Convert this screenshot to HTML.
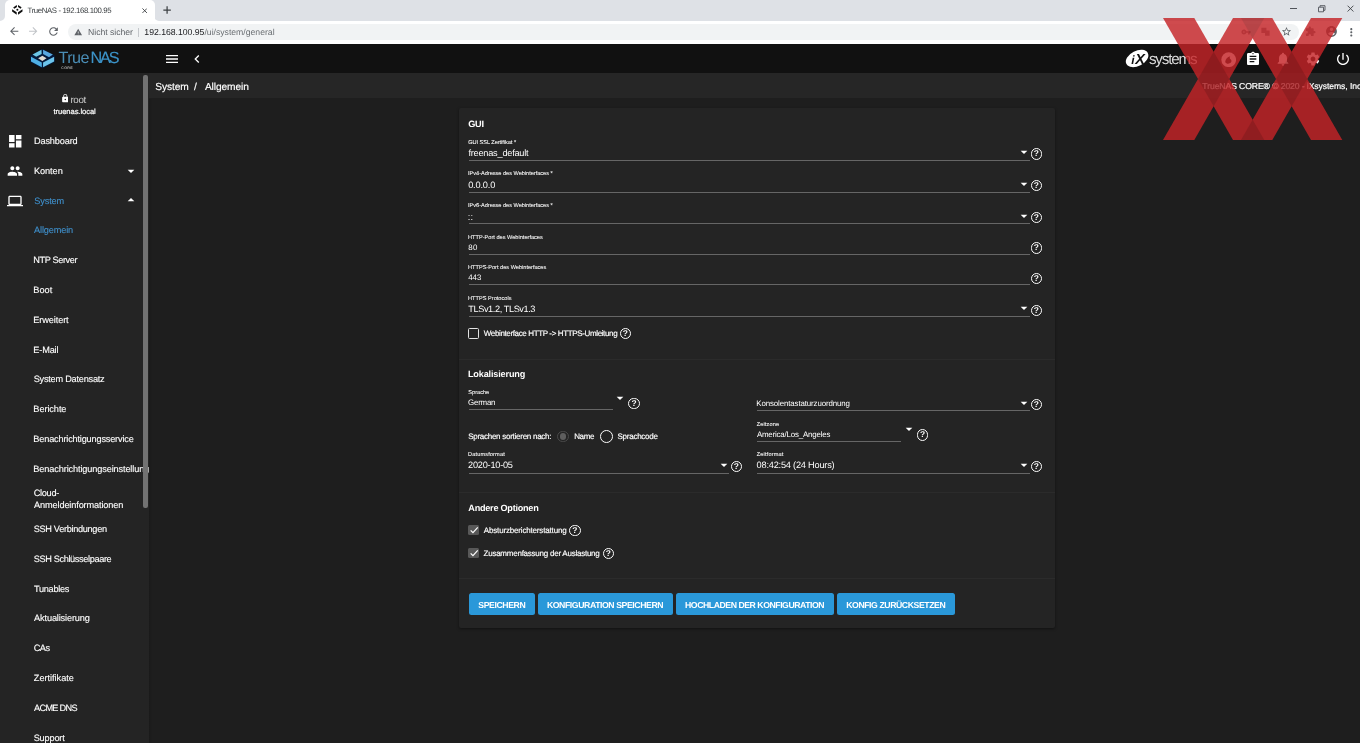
<!DOCTYPE html>
<html lang="de">
<head>
<meta charset="utf-8">
<title>TrueNAS - 192.168.100.95</title>
<style>
*{box-sizing:border-box;margin:0;padding:0}
html,body{width:1360px;height:743px;overflow:hidden;background:#1e1e1e}
body{font-family:"Liberation Sans",sans-serif;color:#fff;position:relative;text-rendering:geometricPrecision}
#root{position:absolute;left:0;top:0;width:1360px;height:743px;overflow:hidden;will-change:transform}
.a{position:absolute;white-space:nowrap;line-height:1}
.b{position:absolute}
svg{position:absolute;display:block}
#tabbar{left:0;top:0;width:1360px;height:21px;background:#dee1e6}
#tab{left:4.500px;top:0;width:150px;height:21px;background:#fff;border-radius:5px 5px 0 0}
#toolbar{left:0;top:20.500px;width:1360px;height:23.500px;background:#fff}
#omni{left:68px;top:23.500px;width:1231px;height:16.500px;border-radius:8.250px;background:#f1f3f4}
#topbar{left:0;top:44px;width:1360px;height:28.700px;background:#111}
#crumb{left:148px;top:72.700px;width:1212px;height:25.800px;background:#262626}
#side{left:0;top:72.700px;width:149px;height:671px;background:#242424}
#sb{left:143.200px;top:75px;width:4.500px;height:433.300px;background:#727272;border-radius:2px}
#card{left:459px;top:108px;width:596px;height:519.500px;background:#242424;border-radius:2px;box-shadow:0 1px 3px rgba(0,0,0,.45)}
.ul{position:absolute;height:1.200px;background:#666}
.hr{position:absolute;left:459px;width:596px;height:1px;background:#2b2b2b}
.help{position:absolute;width:11.400px;height:11.400px;border:1.450px solid #fff;border-radius:50%;color:#fff;font-size:8.400px;font-weight:bold;text-align:center;line-height:9.300px}
.btn{position:absolute;top:593.200px;height:22.300px;background:#2a98d9;border-radius:2.500px}
.cb{position:absolute;border-radius:1.500px}
</style>
</head>
<body>
<div id="root">
<div class="b" id="tabbar"></div><div class="b" id="tab"></div><div class="b" id="toolbar"></div><div class="b" id="omni"></div>
<svg style="left:0;top:16px" width="5" height="5" viewBox="0 0 5 5"><path fill="#fff" d="M5 0v5H0A5 5 0 0 0 5 0z"/></svg>
<svg style="left:154px;top:16px" width="5" height="5" viewBox="0 0 5 5"><path fill="#fff" d="M0 0v5h5A5 5 0 0 1 0 0z"/></svg>
<svg style="left:11px;top:4px" width="13" height="12" viewBox="11 4 13 12"><path fill="#111" d="M16.700 5.100 13.200 7.400 14.300 8.800 17 7.100zM18 5.100 21.600 7.300 20.600 8.800 18 7.100zM12.100 9.300 16.700 12.300V14.700L12.100 11.500zM22.500 9.300 18 12.300V14.700L22.500 11.500z"/><circle cx="17.350" cy="9.800" r="1" fill="#111"/></svg>
<div class="a" id="t0" style="left:27.59px;top:7px;font-size:7.8px;color:#3c4043;letter-spacing:-0.388px;">TrueNAS - 192.168.100.95</div>
<svg style="left:141.500px;top:7.600px" width="5.400" height="5.400" viewBox="0 0 24 24"><path fill="none" stroke="#3c4043" stroke-width="4" d="M2 2l20 20M22 2 2 22"/></svg>
<svg style="left:163.200px;top:6px" width="8.200" height="8.200" viewBox="0 0 24 24"><path fill="none" stroke="#3c4043" stroke-width="3.600" d="M12 1v22M1 12h22"/></svg>
<svg style="left:7.5px;top:25.4px" width="12.4" height="12.4" viewBox="0 0 24 24"><path fill="#5f6368" d="M20 11H7.830l5.590-5.590L12 4l-8 8 8 8 1.410-1.410L7.830 13H20v-2z"/></svg>
<svg style="left:27.1px;top:25.4px" width="12.4" height="12.4" viewBox="0 0 24 24"><path fill="#c1c4c8" d="M12 4l-1.410 1.410L16.170 11H4v2h12.170l-5.580 5.590L12 20l8-8z"/></svg>
<svg style="left:47px;top:25px" width="13" height="13" viewBox="0 0 24 24"><path fill="#5f6368" d="M17.650 6.350C16.200 4.900 14.210 4 12 4c-4.420 0-7.990 3.580-7.990 8s3.570 8 7.990 8c3.730 0 6.840-2.550 7.730-6h-2.080c-.82 2.330-3.040 4-5.650 4-3.310 0-6-2.690-6-6s2.690-6 6-6c1.660 0 3.140.69 4.220 1.780L13 11h7V4l-2.350 2.350z"/></svg>
<svg style="left:74.3px;top:27.7px" width="8.4" height="8.4" viewBox="0 0 24 24"><path fill="#5f6368" d="M1 21h22L12 2 1 21zm12-3h-2v-2h2v2zm0-4h-2v-4h2v4z"/></svg>
<div class="a" id="t1" style="left:88.05px;top:28px;font-size:8.7px;color:#5f6368;letter-spacing:-0.044px;">Nicht sicher</div>
<div class="b" style="left:138px;top:27.800px;width:1px;height:9px;background:#c4c7cb"></div>
<div class="a" id="t2" style="left:144.35px;top:28px;font-size:8.7px;color:#202124;letter-spacing:-0.022px;">192.168.100.95<span style="color:#6b6f73">/ui/system/general</span></div>
<div class="b" style="left:1290.200px;top:7.900px;width:7.200px;height:1px;background:#50545a"></div>
<svg style="left:1317px;top:4px" width="10" height="9" viewBox="1317 4 10 9"><path fill="none" stroke="#50545a" stroke-width=".9" d="M1318.500 7.200h5v4.600h-5zM1320 7.200V5.700h5v4.600h-1.500"/></svg>
<svg style="left:1346px;top:4px" width="9" height="9" viewBox="1346 4 9 9"><path fill="none" stroke="#3c4043" stroke-width=".9" d="M1347.600 5.700l5.800 5.800M1353.400 5.700l-5.800 5.800"/></svg>
<svg style="left:1241px;top:26.5px" width="10" height="10" viewBox="0 0 24 24"><path fill="#7a7f85" d="M12.650 10C11.830 7.670 9.610 6 7 6c-3.310 0-6 2.690-6 6s2.690 6 6 6c2.610 0 4.830-1.670 5.650-4H17v4h4v-4h2v-4H12.650zM7 14c-1.100 0-2-.9-2-2s.9-2 2-2 2 .9 2 2-.9 2-2 2z"/></svg>
<svg style="left:1260px;top:26px" width="11" height="11" viewBox="0 0 24 24"><path fill="#7a7f85" d="M3 4h11v11H3zM11 10h10v11H11z"/></svg>
<svg style="left:1280.5px;top:26px" width="11" height="11" viewBox="0 0 24 24"><path fill="#5f6368" d="M22 9.240l-7.190-.62L12 2 9.190 8.630 2 9.240l5.460 4.730L5.820 21 12 17.270 18.180 21l-1.630-7.030L22 9.240zM12 15.400l-3.760 2.270 1-4.280-3.320-2.880 4.380-.38L12 6.100l1.710 4.040 4.380.38-3.320 2.880 1 4.280L12 15.400z"/></svg>
<svg style="left:1304.5px;top:26px" width="11" height="11" viewBox="0 0 24 24"><path fill="#7a7f85" d="M20.500 11H19V7c0-1.100-.9-2-2-2h-4V3.500C13 2.120 11.880 1 10.500 1S8 2.120 8 3.500V5H4c-1.100 0-1.990.9-1.990 2v3.800H3.500c1.490 0 2.700 1.210 2.700 2.700s-1.210 2.700-2.700 2.700H2V20c0 1.100.9 2 2 2h3.800v-1.500c0-1.490 1.210-2.700 2.700-2.700 1.490 0 2.700 1.210 2.700 2.700V22H17c1.100 0 2-.9 2-2v-4h1.500c1.380 0 2.500-1.120 2.500-2.500S21.880 11 20.500 11z"/></svg>
<svg style="left:1324.5px;top:25px" width="13" height="13" viewBox="0 0 24 24"><path fill="#5f6368" d="M12 2C6.480 2 2 6.480 2 12s4.480 10 10 10 10-4.480 10-10S17.520 2 12 2zm0 3c1.660 0 3 1.340 3 3s-1.340 3-3 3-3-1.340-3-3 1.340-3 3-3zm0 14.200c-2.500 0-4.710-1.280-6-3.220.03-1.990 4-3.080 6-3.080 1.990 0 5.970 1.090 6 3.080-1.290 1.940-3.500 3.220-6 3.220z"/></svg>
<svg style="left:1344.9px;top:25.6px" width="12.6" height="12.6" viewBox="0 0 24 24"><path fill="#5f6368" d="M12 8c1.100 0 2-.9 2-2s-.9-2-2-2-2 .9-2 2 .9 2 2 2zm0 2c-1.100 0-2 .9-2 2s.9 2 2 2 2-.9 2-2-.9-2-2-2zm0 6c-1.100 0-2 .9-2 2s.9 2 2 2 2-.9 2-2-.9-2-2-2z"/></svg>
<div class="b" id="topbar"></div><div class="b" id="crumb"></div><div class="b" id="side"></div><div class="b" id="card"></div>
<svg style="left:28px;top:46px" width="30" height="26" viewBox="28 46 30 26">
<path fill="#04193a" d="M42.350 48.900 54.800 55.600V62L42.350 68.400 30.300 62V55.600z"/>
<path fill="#6cc6e6" d="M41.500 49.700 32.550 54.600 36.200 56.850 41.650 53.900z"/>
<path fill="#5aa8e0" d="M43.050 49.700 52.850 54.600 49 57.200 43.050 54.050z"/>
<path fill="#4fb0e6" d="M31 56.850 41.800 62.450V67.350L31 61.400z"/>
<path fill="#6cc4ec" d="M54.100 56.850 43.050 62.450V67.350L54.100 61.400z"/>
<path fill="#e2dcd2" d="M42.350 55.800 46.550 58.250 42.350 61.050 38.150 58.250z"/>
</svg>
<div class="a" id="t3" style="left:58.48px;top:50px;font-size:16.2px;color:#4a8db5;letter-spacing:-.55px;">True<span style="color:#3c93c8;-webkit-text-stroke:.12px #3c93c8;letter-spacing:-2.2px;margin-left:1.6px">NAS</span></div>
<div class="a" id="t4" style="left:61.36px;top:67px;font-size:3.6px;color:#b0b0b0;font-weight:bold;letter-spacing:0.296px;">CORE</div>
<svg style="left:163.6px;top:50.8px" width="16" height="16" viewBox="0 0 24 24"><path fill="#fff" d="M3 18h18v-2H3v2zm0-5h18v-2H3v2zm0-7v2h18V6H3z"/></svg>
<svg style="left:188.6px;top:51.2px" width="16" height="16" viewBox="0 0 24 24"><path fill="#fff" d="M15.41 7.41L14 6l-6 6 6 6 1.41-1.41L10.83 12z"/></svg>
<div class="b" style="left:1125.400px;top:51.100px;width:24px;height:14.600px;background:#fff;border-radius:50%;transform:rotate(-27deg)"></div>
<div class="a" id="t5" style="left:1131.18px;top:53px;font-size:14.5px;color:#111;font-weight:bold;font-style:italic;"><span style="font-size:12px;margin-right:.85px">i</span>X</div>
<div class="a" id="t6" style="left:1148.92px;top:52px;font-size:15.2px;color:#dcdcdc;letter-spacing:-1.182px;">systems</div>
<svg style="left:1220.500px;top:52px" width="15.400" height="15.400" viewBox="0 0 24 24"><circle cx="12" cy="12" r="11.500" fill="#fff"/><path fill="#111" d="M6.500 15.500c.5-4.500 3.500-8 8-9-1.500 2-1 3.500.5 5 1.500 1.500 2 3 .5 5-2.500 2.500-7.500 2.500-9-1z"/></svg>
<svg style="left:1245px;top:51.3px" width="16" height="16" viewBox="0 0 24 24"><path fill="#fff" d="M19 3h-4.180C14.400 1.840 13.300 1 12 1c-1.300 0-2.400.84-2.820 2H5c-1.100 0-2 .9-2 2v14c0 1.100.9 2 2 2h14c1.100 0 2-.9 2-2V5c0-1.100-.9-2-2-2zm-7 0c.55 0 1 .45 1 1s-.45 1-1 1-1-.45-1-1 .45-1 1-1zm2 14H7v-2h7v2zm3-4H7v-2h10v2zm0-4H7V7h10v2z"/></svg>
<svg style="left:1274.6px;top:51.3px" width="16" height="16" viewBox="0 0 24 24"><path fill="#fff" d="M12 22c1.100 0 2-.9 2-2h-4c0 1.100.89 2 2 2zm6-6v-5c0-3.070-1.640-5.640-4.500-6.320V4c0-.83-.67-1.500-1.500-1.500s-1.500.67-1.500 1.500v.68C7.630 5.360 6 7.920 6 11v5l-2 2v1h16v-1l-2-2z"/></svg>
<svg style="left:1304.8px;top:51.3px" width="16" height="16" viewBox="0 0 24 24"><path fill="#fff" d="M19.140 12.940c.04-.3.06-.61.06-.94 0-.32-.02-.64-.07-.94l2.030-1.580c.18-.14.23-.41.12-.61l-1.920-3.320c-.12-.22-.37-.29-.59-.22l-2.390.96c-.5-.38-1.030-.7-1.620-.94l-.36-2.540c-.04-.24-.24-.41-.48-.41h-3.840c-.24 0-.43.17-.47.41l-.36 2.540c-.59.24-1.130.57-1.620.94l-2.390-.96c-.22-.08-.47 0-.59.220L2.740 8.870c-.12.210-.08.470.12.610l2.030 1.580c-.05.300-.09.630-.09.940s.02.640.07.940l-2.030 1.580c-.18.140-.23.410-.12.610l1.920 3.320c.12.220.37.290.59.220l2.390-.96c.5.380 1.030.7 1.620.94l.36 2.540c.05.240.24.410.48.410h3.840c.24 0 .44-.17.47-.41l.36-2.540c.59-.24 1.130-.56 1.620-.94l2.390.96c.22.080.47 0 .59-.22l1.920-3.320c.12-.22.07-.47-.12-.61l-2.010-1.580zM12 15.600c-1.980 0-3.600-1.620-3.600-3.600s1.620-3.600 3.600-3.600 3.600 1.620 3.600 3.600-1.620 3.600-3.600 3.600z"/></svg>
<svg style="left:1334.6px;top:50.9px" width="16" height="16" viewBox="0 0 24 24"><path fill="#fff" d="M13 3h-2v10h2V3zm4.830 2.170l-1.420 1.420C17.990 7.860 19 9.810 19 12c0 3.870-3.130 7-7 7s-7-3.130-7-7c0-2.190 1.010-4.140 2.580-5.420L6.170 5.170C4.230 6.820 3 9.260 3 12c0 4.970 4.030 9 9 9s9-4.030 9-9c0-2.740-1.230-5.180-3.170-6.830z"/></svg>
<div class="a" id="t7" style="left:155.34px;top:83px;font-size:10.2px;color:#fff;letter-spacing:-0.093px;-webkit-text-stroke:.16px;">System</div>
<div class="a" id="t8" style="left:193.9px;top:83px;font-size:10.2px;color:#fff;-webkit-text-stroke:.16px;">/</div>
<div class="a" id="t9" style="left:204.9px;top:83px;font-size:10.2px;color:#fff;letter-spacing:-0.103px;-webkit-text-stroke:.16px;">Allgemein</div>
<div class="a" id="t10" style="left:1202.33px;top:82px;font-size:8.6px;color:#fff;letter-spacing:-0.082px;-webkit-text-stroke:.2px;">TrueNAS CORE® © 2020 - iXsystems, Inc</div>
<svg style="left:61.500px;top:94.400px" width="6.600" height="8.300" viewBox="4 1 16 21"><path fill="#fff" d="M18 8h-1V6c0-2.76-2.24-5-5-5S7 3.24 7 6v2H6c-1.100 0-2 .9-2 2v10c0 1.100.9 2 2 2h12c1.100 0 2-.9 2-2V10c0-1.100-.9-2-2-2zm-6 9c-1.100 0-2-.9-2-2s.9-2 2-2 2 .9 2 2-.9 2-2 2zm3.100-9H8.900V6c0-1.710 1.390-3.100 3.100-3.100 1.710 0 3.100 1.390 3.100 3.100v2z"/></svg>
<div class="a" id="t11" style="left:70.46px;top:96px;font-size:9.8px;color:#cdcdcd;letter-spacing:-0.375px;">root</div>
<div class="a" id="t12" style="left:53.49px;top:108px;font-size:7.6px;color:#fff;letter-spacing:-0.065px;-webkit-text-stroke:.2px #fff;">truenas.local</div>
<svg style="left:6.7px;top:132.6px" width="16.5" height="16.5" viewBox="0 0 24 24"><path fill="#fff" d="M3 13h8V3H3v10zm0 8h8v-6H3v6zm10 0h8V11h-8v10zm0-18v6h8V3h-8z"/></svg>
<div class="a" id="t13" style="left:33.96px;top:137px;font-size:9.2px;color:#fff;letter-spacing:-0.157px;-webkit-text-stroke:.12px;">Dashboard</div>
<svg style="left:7.1px;top:162.6px" width="16" height="16" viewBox="0 0 24 24"><path fill="#fff" d="M16 11c1.66 0 2.99-1.34 2.99-3S17.66 5 16 5c-1.66 0-3 1.34-3 3s1.340 3 3 3zm-8 0c1.66 0 2.99-1.34 2.99-3S9.66 5 8 5C6.34 5 5 6.34 5 8s1.34 3 3 3zm0 2c-2.33 0-7 1.17-7 3.500V19h14v-2.500c0-2.330-4.670-3.500-7-3.500zm8 0c-.29 0-.62.02-.97.05 1.160.84 1.970 1.970 1.970 3.450V19h6v-2.500c0-2.330-4.670-3.500-7-3.500z"/></svg>
<div class="a" id="t14" style="left:33.96px;top:167px;font-size:9.2px;color:#fff;letter-spacing:-0.065px;-webkit-text-stroke:.12px;">Konten</div>
<svg style="left:123.2px;top:162.5px" width="16" height="16" viewBox="0 0 24 24"><path fill="#fff" d="M7 10l5 5 5-5z"/></svg>
<svg style="left:7px;top:192.6px" width="16" height="16" viewBox="0 0 24 24"><path fill="#fff" d="M20 18c1.1 0 1.99-.9 1.99-2L22 6c0-1.100-.9-2-2-2H4c-1.100 0-2 .9-2 2v10c0 1.100.9 2 2 2H0v2h24v-2h-4zM4 6h16v10H4V6z"/></svg>
<div class="a" id="t15" style="left:34.29px;top:197px;font-size:9.2px;color:#3f8fca;letter-spacing:-0.149px;-webkit-text-stroke:.12px;">System</div>
<svg style="left:123.2px;top:192.3px" width="16" height="16" viewBox="0 0 24 24"><path fill="#fff" d="M7 14l5-5 5 5z"/></svg>
<div class="a" id="t16" style="left:34.1px;top:226px;font-size:9.2px;color:#3f8fca;letter-spacing:-0.16px;-webkit-text-stroke:.12px;">Allgemein</div>
<div class="a" id="t17" style="left:33.36px;top:256px;font-size:9.2px;color:#fff;letter-spacing:-0.408px;-webkit-text-stroke:.12px;">NTP Server</div>
<div class="a" id="t18" style="left:33.36px;top:286px;font-size:9.2px;color:#fff;letter-spacing:-0.015px;-webkit-text-stroke:.12px;">Boot</div>
<div class="a" id="t19" style="left:33.36px;top:316px;font-size:9.2px;color:#fff;letter-spacing:-0.123px;-webkit-text-stroke:.12px;">Erweitert</div>
<div class="a" id="t20" style="left:33.36px;top:346px;font-size:9.2px;color:#fff;letter-spacing:-0.188px;-webkit-text-stroke:.12px;">E-Mail</div>
<div class="a" id="t21" style="left:33.69px;top:375px;font-size:9.2px;color:#fff;letter-spacing:-0.236px;-webkit-text-stroke:.12px;">System Datensatz</div>
<div class="a" id="t22" style="left:33.36px;top:405px;font-size:9.2px;color:#fff;letter-spacing:-0.086px;-webkit-text-stroke:.12px;">Berichte</div>
<div class="a" id="t23" style="left:33.36px;top:435px;font-size:9.2px;color:#fff;letter-spacing:-0.186px;-webkit-text-stroke:.12px;">Benachrichtigungsservice</div>
<div class="a" id="t24" style="left:33.36px;top:465px;font-size:9.2px;color:#fff;letter-spacing:-0.135px;-webkit-text-stroke:.12px;">Benachrichtigungseinstellung</div>
<div class="a" id="t25" style="left:33.64px;top:489px;font-size:9.2px;color:#fff;letter-spacing:-0.264px;-webkit-text-stroke:.12px;">Cloud-</div>
<div class="a" id="t26" style="left:34.1px;top:501px;font-size:9.2px;color:#fff;letter-spacing:-0.141px;-webkit-text-stroke:.12px;">Anmeldeinformationen</div>
<div class="a" id="t27" style="left:33.69px;top:525px;font-size:9.2px;color:#fff;letter-spacing:-0.319px;-webkit-text-stroke:.12px;">SSH Verbindungen</div>
<div class="a" id="t28" style="left:33.69px;top:555px;font-size:9.2px;color:#fff;letter-spacing:-0.369px;-webkit-text-stroke:.12px;">SSH Schlüsselpaare</div>
<div class="a" id="t29" style="left:33.92px;top:585px;font-size:9.2px;color:#fff;letter-spacing:-0.28px;-webkit-text-stroke:.12px;">Tunables</div>
<div class="a" id="t30" style="left:34.1px;top:614px;font-size:9.2px;color:#fff;letter-spacing:-0.15px;-webkit-text-stroke:.12px;">Aktualisierung</div>
<div class="a" id="t31" style="left:33.64px;top:644px;font-size:9.2px;color:#fff;letter-spacing:-0.389px;-webkit-text-stroke:.12px;">CAs</div>
<div class="a" id="t32" style="left:33.82px;top:674px;font-size:9.2px;color:#fff;letter-spacing:-0.029px;-webkit-text-stroke:.12px;">Zertifikate</div>
<div class="a" id="t33" style="left:34.1px;top:704px;font-size:9.2px;color:#fff;letter-spacing:-0.716px;-webkit-text-stroke:.12px;">ACME DNS</div>
<div class="a" id="t34" style="left:33.69px;top:734px;font-size:9.2px;color:#fff;letter-spacing:-0.191px;-webkit-text-stroke:.12px;">Support</div>
<div class="b" style="left:149px;top:98.500px;width:12px;height:645px;background:linear-gradient(90deg,#1a1a1a,#1e1e1e 3px)"></div>
<div class="b" id="sb"></div>
<div class="a" id="t35" style="left:468.13px;top:120px;font-size:9.2px;color:#fff;font-weight:bold;letter-spacing:-0.249px;">GUI</div>
<div class="a" id="t36" style="left:468.22px;top:141px;font-size:5.6px;color:#f2f2f2;letter-spacing:-0.039px;-webkit-text-stroke:.1px;">GUI SSL Zertifikat *</div>
<div class="a" id="t37" style="left:468.41px;top:149px;font-size:9.2px;color:#fff;letter-spacing:-0.223px;">freenas_default</div>
<div class="ul" style="left:468.5px;top:159.6px;width:561.1px"></div>
<svg style="left:1015.7px;top:143.97px" width="16" height="16" viewBox="0 0 24 24"><path fill="#fff" d="M7 10l5 5 5-5z"/></svg>
<div class="help" style="left:1030.5px;top:148.2px">?</div>
<div class="a" id="t38" style="left:468px;top:172px;font-size:5.6px;color:#f2f2f2;letter-spacing:-0.013px;-webkit-text-stroke:.1px;">IPv4-Adresse des Webinterfaces *</div>
<div class="a" id="t39" style="left:468.18px;top:181px;font-size:9.2px;color:#fff;letter-spacing:-0.159px;">0.0.0.0</div>
<div class="ul" style="left:468.5px;top:191.5px;width:561.1px"></div>
<svg style="left:1015.7px;top:175.87px" width="16" height="16" viewBox="0 0 24 24"><path fill="#fff" d="M7 10l5 5 5-5z"/></svg>
<div class="help" style="left:1030.5px;top:180.1px">?</div>
<div class="a" id="t40" style="left:468px;top:204px;font-size:5.6px;color:#f2f2f2;letter-spacing:-0.013px;-webkit-text-stroke:.1px;">IPv6-Adresse des Webinterfaces *</div>
<div class="a" id="t41" style="left:467.67px;top:213px;font-size:9.2px;color:#fff;letter-spacing:0.327px;">::</div>
<div class="ul" style="left:468.5px;top:223.3px;width:561.1px"></div>
<svg style="left:1015.7px;top:207.67px" width="16" height="16" viewBox="0 0 24 24"><path fill="#fff" d="M7 10l5 5 5-5z"/></svg>
<div class="help" style="left:1030.5px;top:211.9px">?</div>
<div class="a" id="t42" style="left:468.05px;top:236px;font-size:5.6px;color:#f2f2f2;letter-spacing:0.009px;-webkit-text-stroke:.1px;">HTTP-Port des Webinterfaces</div>
<div class="a" id="t43" style="left:468.18px;top:244px;font-size:7.9px;color:#fff;letter-spacing:0.52px;">80</div>
<div class="ul" style="left:468.5px;top:253.7px;width:561.1px"></div>
<div class="help" style="left:1030.5px;top:242.3px">?</div>
<div class="a" id="t44" style="left:468.05px;top:266px;font-size:5.6px;color:#f2f2f2;letter-spacing:-0px;-webkit-text-stroke:.1px;">HTTPS-Port des Webinterfaces</div>
<div class="a" id="t45" style="left:468.34px;top:274px;font-size:7.9px;color:#fff;letter-spacing:-0.094px;">443</div>
<div class="ul" style="left:468.5px;top:284px;width:561.1px"></div>
<div class="help" style="left:1030.5px;top:272.6px">?</div>
<div class="a" id="t46" style="left:468.05px;top:297px;font-size:5.6px;color:#f2f2f2;letter-spacing:0.016px;-webkit-text-stroke:.1px;">HTTPS Protocols</div>
<div class="a" id="t47" style="left:468.32px;top:305px;font-size:9.2px;color:#fff;letter-spacing:-0.414px;">TLSv1.2, TLSv1.3</div>
<div class="ul" style="left:468.5px;top:315.9px;width:561.1px"></div>
<svg style="left:1015.7px;top:300.27px" width="16" height="16" viewBox="0 0 24 24"><path fill="#fff" d="M7 10l5 5 5-5z"/></svg>
<div class="help" style="left:1030.5px;top:304.5px">?</div>
<div class="cb" style="left:468.200px;top:328.200px;width:10.900px;height:10.700px;border:1.550px solid #e2e2e2"></div>
<div class="a" id="t48" style="left:483.8px;top:330px;font-size:8px;color:#fff;letter-spacing:-0.367px;-webkit-text-stroke:.16px;">Webinterface HTTP -&gt; HTTPS-Umleitung</div>
<div class="help" style="left:619.5px;top:328.1px">?</div>
<div class="hr" style="top:358.500px"></div>
<div class="a" id="t49" style="left:467.91px;top:370px;font-size:9.1px;color:#fff;font-weight:bold;letter-spacing:-0.145px;">Lokalisierung</div>
<div class="a" id="t50" style="left:468.25px;top:391px;font-size:5.6px;color:#f2f2f2;letter-spacing:0.023px;-webkit-text-stroke:.1px;">Sprache</div>
<div class="a" id="t51" style="left:468.11px;top:399px;font-size:7.9px;color:#fff;letter-spacing:-0.228px;">German</div>
<div class="ul" style="left:468.5px;top:408.9px;width:144.1px"></div>
<svg style="left:612.3px;top:389.57px" width="16" height="16" viewBox="0 0 24 24"><path fill="#fff" d="M7 10l5 5 5-5z"/></svg>
<div class="help" style="left:628.3px;top:398px">?</div>
<div class="a" id="t52" style="left:756.27px;top:400px;font-size:7.9px;color:#fff;letter-spacing:-0.117px;">Konsolentastaturzuordnung</div>
<div class="ul" style="left:756.9px;top:410.3px;width:272.7px"></div>
<svg style="left:1015.7px;top:394.67px" width="16" height="16" viewBox="0 0 24 24"><path fill="#fff" d="M7 10l5 5 5-5z"/></svg>
<div class="help" style="left:1030.6px;top:398.7px">?</div>
<div class="a" id="t53" style="left:468.14px;top:433px;font-size:8px;color:#fff;letter-spacing:-0.262px;-webkit-text-stroke:.16px;">Sprachen sortieren nach:</div>
<div class="b" style="left:557.400px;top:430.600px;width:11.800px;height:11.800px;border-radius:50%;border:1.200px solid #4a4a4a"></div>
<div class="b" style="left:560.200px;top:433.400px;width:6.200px;height:6.200px;border-radius:50%;background:#5e5e5e"></div>
<div class="a" id="t54" style="left:574.16px;top:433px;font-size:8px;color:#fff;letter-spacing:-0.325px;-webkit-text-stroke:.16px;">Name</div>
<div class="b" style="left:600.400px;top:430px;width:12.900px;height:12.900px;border-radius:50%;border:1.300px solid #fff"></div>
<div class="a" id="t55" style="left:617.54px;top:433px;font-size:8px;color:#fff;letter-spacing:-0.257px;-webkit-text-stroke:.16px;">Sprachcode</div>
<div class="a" id="t56" style="left:756.73px;top:423px;font-size:5.6px;color:#f2f2f2;letter-spacing:0.119px;-webkit-text-stroke:.1px;">Zeitzone</div>
<div class="a" id="t57" style="left:756.9px;top:431px;font-size:7.9px;color:#fff;letter-spacing:-0.183px;">America/Los_Angeles</div>
<div class="ul" style="left:756.9px;top:441px;width:144.6px"></div>
<svg style="left:900.7px;top:421.37px" width="16" height="16" viewBox="0 0 24 24"><path fill="#fff" d="M7 10l5 5 5-5z"/></svg>
<div class="help" style="left:916.9px;top:429.4px">?</div>
<div class="a" id="t58" style="left:468.05px;top:453px;font-size:5.6px;color:#f2f2f2;letter-spacing:0.14px;-webkit-text-stroke:.1px;">Datumsformat</div>
<div class="a" id="t59" style="left:468.04px;top:461px;font-size:9.2px;color:#fff;letter-spacing:-0.229px;">2020-10-05</div>
<div class="ul" style="left:468.5px;top:472.8px;width:260.5px"></div>
<svg style="left:716.1px;top:456.67px" width="16" height="16" viewBox="0 0 24 24"><path fill="#fff" d="M7 10l5 5 5-5z"/></svg>
<div class="help" style="left:730.5px;top:460.9px">?</div>
<div class="a" id="t60" style="left:756.73px;top:453px;font-size:5.6px;color:#f2f2f2;letter-spacing:0.166px;-webkit-text-stroke:.1px;">Zeitformat</div>
<div class="a" id="t61" style="left:756.58px;top:461px;font-size:9.2px;color:#fff;letter-spacing:-0.204px;">08:42:54 (24 Hours)</div>
<div class="ul" style="left:756.9px;top:472.8px;width:272.7px"></div>
<svg style="left:1015.7px;top:456.67px" width="16" height="16" viewBox="0 0 24 24"><path fill="#fff" d="M7 10l5 5 5-5z"/></svg>
<div class="help" style="left:1030.6px;top:460.9px">?</div>
<div class="hr" style="top:492.100px"></div>
<div class="a" id="t62" style="left:468.32px;top:504px;font-size:9.1px;color:#fff;font-weight:bold;letter-spacing:-0.238px;">Andere Optionen</div>
<div class="cb" style="left:468.400px;top:525.1px;width:10.500px;height:10.300px;background:#585858"></div>
<svg style="left:468.700px;top:525px" width="10" height="10" viewBox="0 0 24 24"><path fill="none" stroke="#fff" stroke-width="2.800" d="M4 13l5.500 5.500L21 5.500"/></svg>
<div class="a" id="t63" style="left:483.8px;top:527px;font-size:8px;color:#fff;letter-spacing:-0.167px;-webkit-text-stroke:.16px;">Absturzberichterstattung</div>
<div class="help" style="left:569.2px;top:524.7px">?</div>
<div class="cb" style="left:468.400px;top:548.1px;width:10.500px;height:10.300px;background:#585858"></div>
<svg style="left:468.700px;top:548px" width="10" height="10" viewBox="0 0 24 24"><path fill="none" stroke="#fff" stroke-width="2.800" d="M4 13l5.500 5.500L21 5.500"/></svg>
<div class="a" id="t64" style="left:483.56px;top:550px;font-size:8px;color:#fff;letter-spacing:-0.24px;-webkit-text-stroke:.16px;">Zusammenfassung der Auslastung</div>
<div class="help" style="left:602.6px;top:547.7px">?</div>
<div class="hr" style="top:577.500px"></div>
<div class="btn" style="left:468.5px;width:66.2px"></div>
<div class="a" id="t65" style="left:478.28px;top:601px;font-size:8.7px;color:#fff;font-weight:bold;letter-spacing:-0.411px;">SPEICHERN</div>
<div class="btn" style="left:537.7px;width:135.5px"></div>
<div class="a" id="t66" style="left:546.93px;top:601px;font-size:8.7px;color:#fff;font-weight:bold;letter-spacing:-0.416px;">KONFIGURATION SPEICHERN</div>
<div class="btn" style="left:675.6px;width:158.7px"></div>
<div class="a" id="t67" style="left:685.03px;top:601px;font-size:8.7px;color:#fff;font-weight:bold;letter-spacing:-0.452px;">HOCHLADEN DER KONFIGURATION</div>
<div class="btn" style="left:837.1px;width:118px"></div>
<div class="a" id="t68" style="left:846.23px;top:601px;font-size:8.7px;color:#fff;font-weight:bold;letter-spacing:-0.428px;">KONFIG ZURÜCKSETZEN</div>
<div class="b" id="wm" style="left:0;top:0;width:1360px;height:160px;opacity:.82"><div class="b" style="left:1162.00px;top:17.00px;width:103.30px;height:124.00px;background:#c52428;clip-path:polygon(1.00px 1.00px,32.30px 1.00px,102.30px 123.00px,71.00px 123.00px)"></div><div class="b" style="left:1162.00px;top:17.00px;width:103.30px;height:124.00px;background:#c52428;clip-path:polygon(71.00px 1.00px,102.30px 1.00px,32.30px 123.00px,1.00px 123.00px)"></div><div class="b" style="left:1240.00px;top:17.00px;width:103.30px;height:124.00px;background:#c52428;clip-path:polygon(1.00px 1.00px,32.30px 1.00px,102.30px 123.00px,71.00px 123.00px)"></div><div class="b" style="left:1240.00px;top:17.00px;width:103.30px;height:124.00px;background:#c52428;clip-path:polygon(71.00px 1.00px,102.30px 1.00px,32.30px 123.00px,1.00px 123.00px)"></div><div class="b" style="left:1197.00px;top:50.72px;width:33.30px;height:56.55px;background:#aa1e22;clip-path:polygon(16.65px 1.00px,32.30px 28.28px,16.65px 55.55px,1.00px 28.28px)"></div><div class="b" style="left:1275.00px;top:50.72px;width:33.30px;height:56.55px;background:#aa1e22;clip-path:polygon(16.65px 1.00px,32.30px 28.28px,16.65px 55.55px,1.00px 28.28px)"></div><div class="b" style="left:1240.00px;top:17.00px;width:25.30px;height:22.30px;background:#aa1e22;clip-path:polygon(1.00px 1.00px,24.30px 1.00px,12.65px 21.30px)"></div><div class="b" style="left:1240.00px;top:118.70px;width:25.30px;height:22.30px;background:#aa1e22;clip-path:polygon(1.00px 21.30px,24.30px 21.30px,12.65px 1.00px)"></div></div>
</div>
</body>
</html>
